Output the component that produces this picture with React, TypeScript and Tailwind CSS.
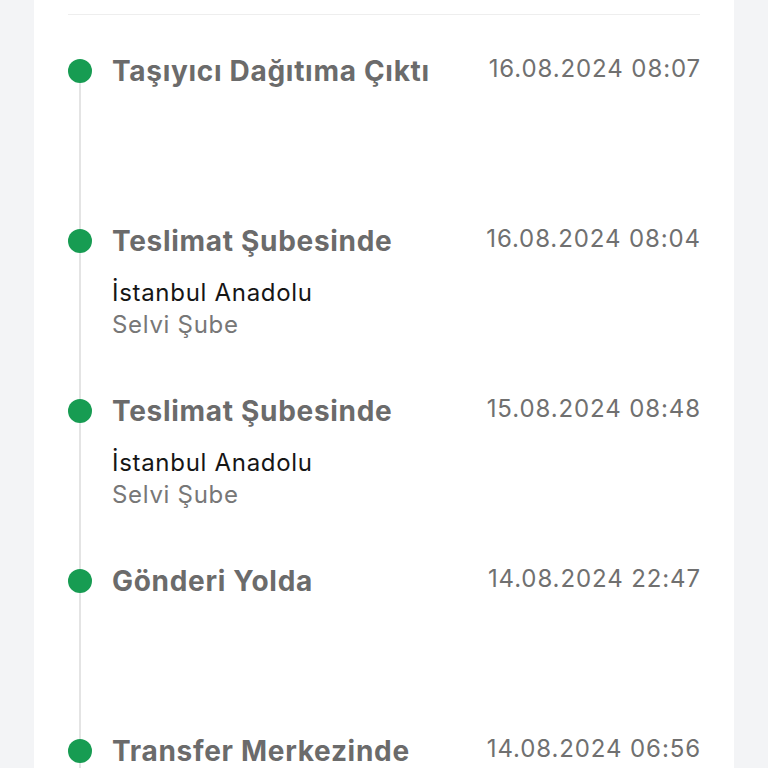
import React from "react";

type Ev = { title: string; date: string; sub?: [string, string] };

const events: Ev[] = [
  { title: "Taşıyıcı Dağıtıma Çıktı", date: "16.08.2024 08:07" },
  { title: "Teslimat Şubesinde", date: "16.08.2024 08:04", sub: ["İstanbul Anadolu", "Selvi Şube"] },
  { title: "Teslimat Şubesinde", date: "15.08.2024 08:48", sub: ["İstanbul Anadolu", "Selvi Şube"] },
  { title: "Gönderi Yolda", date: "14.08.2024 22:47" },
  { title: "Transfer Merkezinde", date: "14.08.2024 06:56" },
];

export default function App() {
  return (
    <div
      className="w-[768px] h-[768px] overflow-hidden bg-[#f3f4f6] px-[34px]"
      style={{ fontFamily: "Inter, 'Noto Sans', sans-serif" }}
    >
      <div className="bg-white h-full px-[34px] pt-[14px]">
        <div className="border-t border-[#eeeeee]" />
        <div className="relative mt-[40px]">
          <div className="absolute left-[11px] top-[16px] bottom-0 w-[2px] bg-[#e4e4e4]" />
          {events.map((e, i) => (
            <div key={i} className="relative flex items-start h-[170px]">
              <div className="w-[24px] h-[32px] flex items-center shrink-0">
                <div className="w-[24px] h-[24px] rounded-full bg-[#179c52]" />
              </div>
              <div className="ml-[20px] flex-1 min-w-0">
                <div className="flex items-start justify-between">
                  <div className="text-[28px] leading-[32px] font-bold text-[#6b6b6b] tracking-[0.7px]">
                    {e.title}
                  </div>
                  <div className="text-[24px] leading-[28px] text-[#707070] tracking-[0.9px] -mr-[1px]">{e.date}</div>
                </div>
                {e.sub && (
                  <div className="mt-[20px]">
                    <div className="text-[24px] leading-[32px] text-[#161616] tracking-[0.7px]">{e.sub[0]}</div>
                    <div className="text-[24px] leading-[32px] text-[#777777] tracking-[0.7px]">{e.sub[1]}</div>
                  </div>
                )}
              </div>
            </div>
          ))}
        </div>
      </div>
    </div>
  );
}
